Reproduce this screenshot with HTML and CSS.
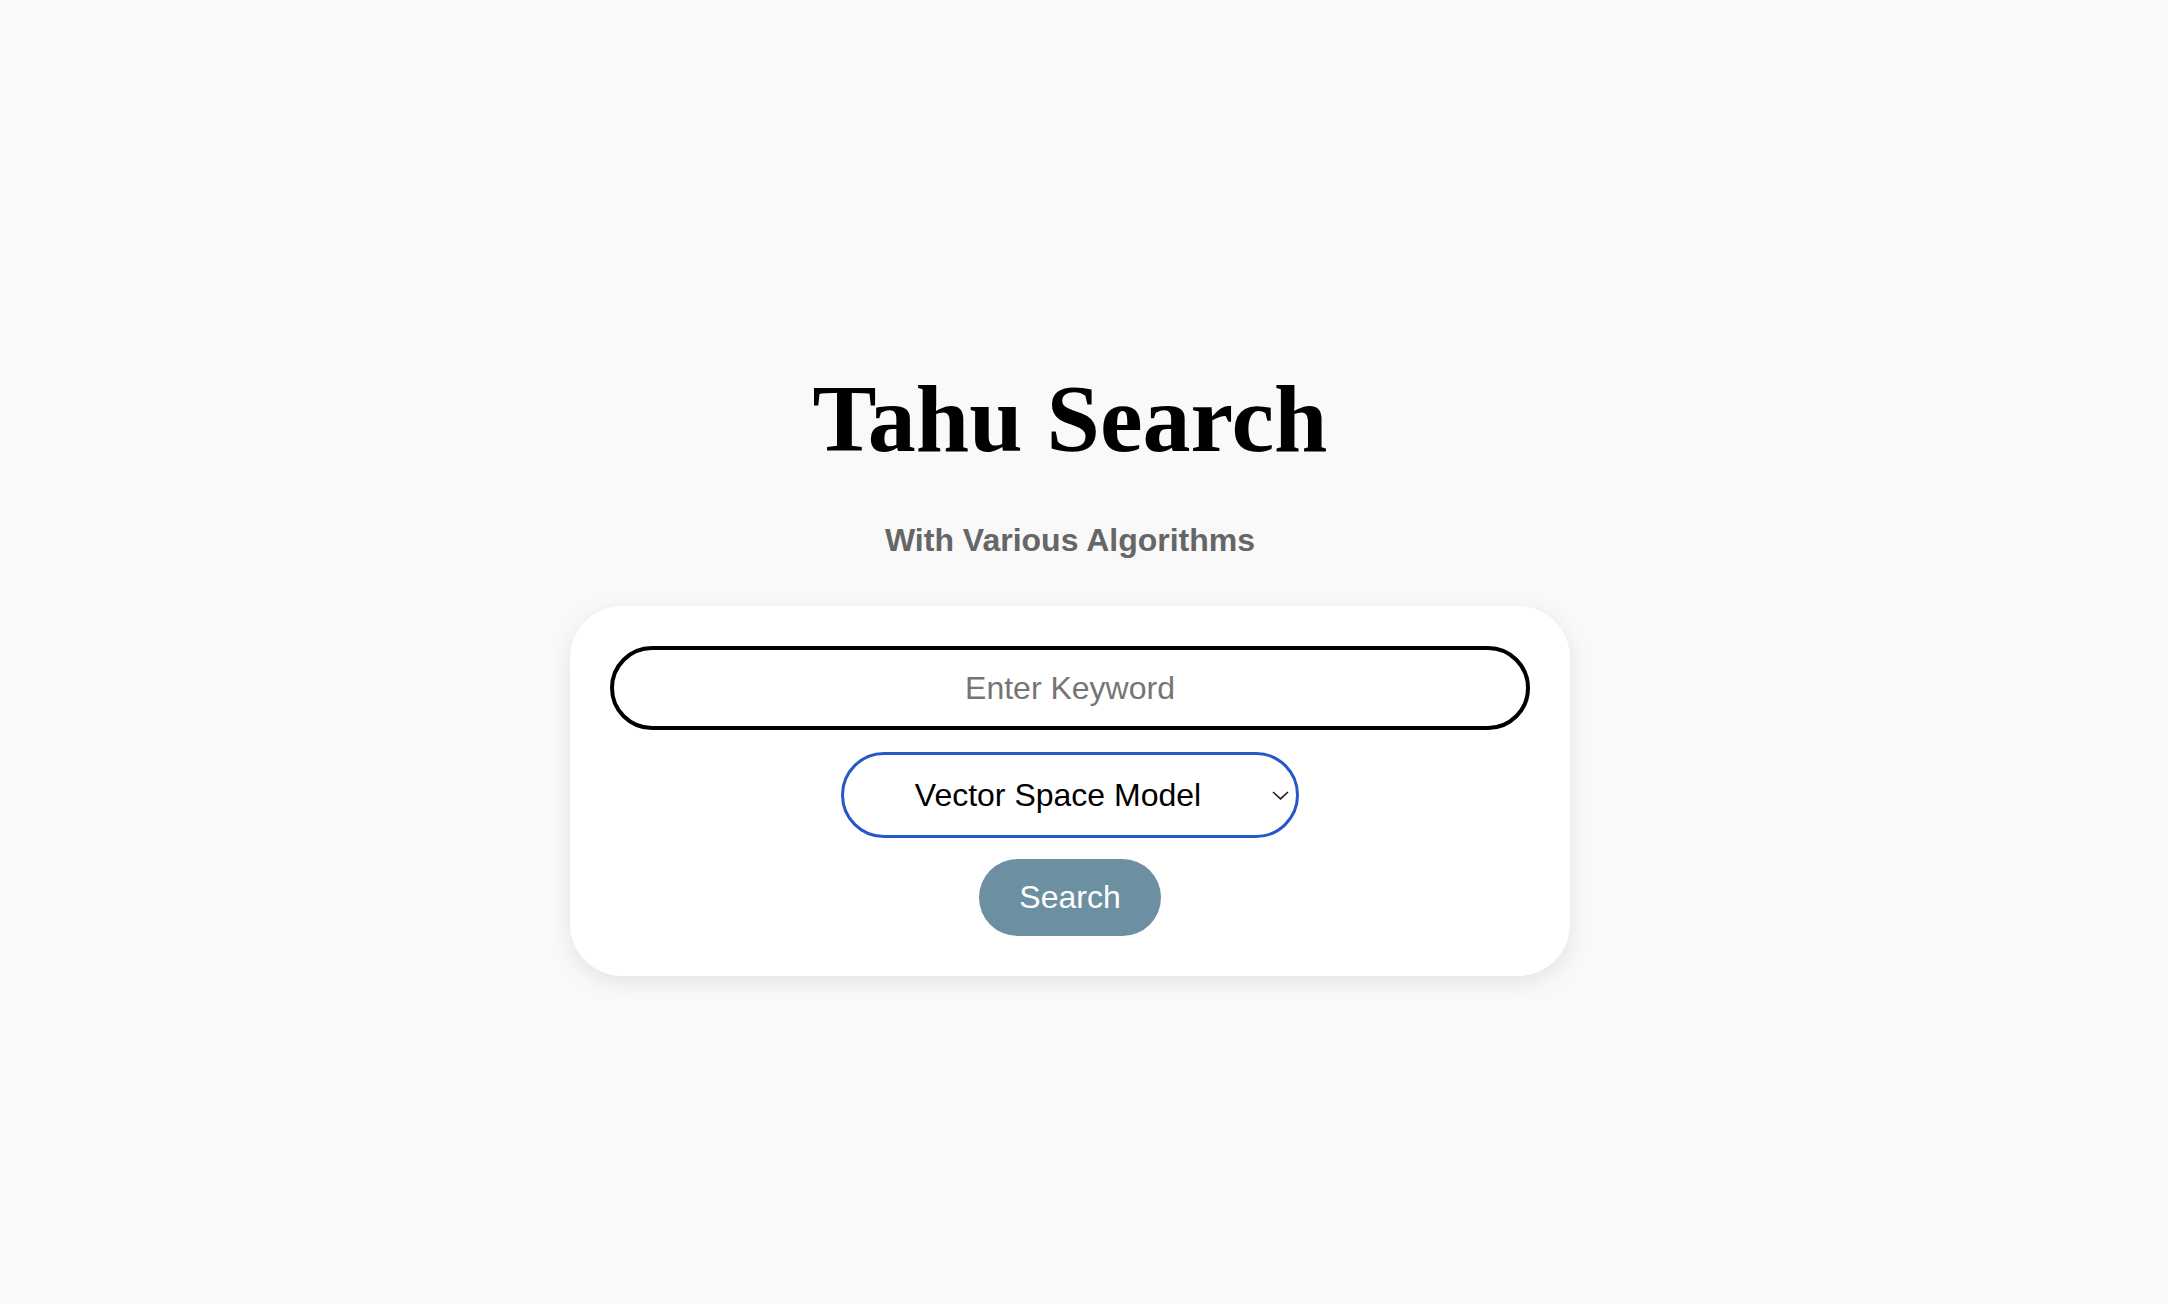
FILE: index.html
```html
<!DOCTYPE html>
<html lang="en">
<head>
<meta charset="utf-8">
<title>Tahu Search</title>
<link rel="stylesheet" href="styles.css">
</head>
<body>
<main class="page">
  <h1 class="title">Tahu Search</h1>
  <h2 class="subtitle">With Various Algorithms</h2>
  <form class="card">
    <input class="keyword" type="text" placeholder="Enter Keyword">
    <span class="select-wrap">
      <select class="algo">
        <option>Vector Space Model</option>
        <option>Boolean Model</option>
        <option>Jaccard</option>
      </select>
      <svg class="chevron" width="17" height="9" viewBox="0 0 17 9"><path d="M1 1 L8.5 7.8 L16 1" fill="none" stroke="#1a1a1a" stroke-width="1.6"/></svg>
    </span>
    <button class="search-btn" type="button">Search</button>
  </form>
</main>
</body>
</html>
```
FILE: styles.css
```css
html, body {
  margin: 0;
  padding: 0;
}
body {
  background: #f9f9f9;
  min-height: 100vh;
}
.page {
  box-sizing: border-box;
  display: flex;
  flex-direction: column;
  align-items: center;
  padding: 371px 28px 0 0;
}
.title {
  margin: 0;
  font-family: "Liberation Serif", "Times New Roman", serif;
  font-weight: bold;
  font-size: 96px;
  line-height: 96px;
  letter-spacing: 0;
  color: #000;
}
.subtitle {
  margin: 57px 0 0;
  font-family: "Liberation Sans", Arial, sans-serif;
  font-weight: bold;
  font-size: 32px;
  line-height: 32px;
  color: #666666;
}
.card {
  box-sizing: border-box;
  width: 1000px;
  margin-top: 50px;
  padding: 40px;
  background: #ffffff;
  border-radius: 52px;
  box-shadow: 0 6px 22px rgba(0, 0, 0, 0.09);
  display: flex;
  flex-direction: column;
  align-items: center;
}
.keyword {
  box-sizing: border-box;
  width: 100%;
  height: 84px;
  margin: 0;
  padding: 0 30px;
  border: 4px solid #000;
  border-radius: 42px;
  background: #fff;
  font-family: "Liberation Sans", Arial, sans-serif;
  font-size: 32px;
  text-align: center;
  color: #000;
  outline: none;
}
.keyword::placeholder {
  color: #757575;
}
.select-wrap {
  position: relative;
  display: block;
  margin-top: 22px;
  width: 458px;
  height: 86px;
}
.algo {
  box-sizing: border-box;
  width: 458px;
  height: 86px;
  margin: 0;
  padding: 0 44px 0 20px;
  border: 3.5px solid #2457c9;
  border-radius: 43px;
  background: #fff;
  -webkit-appearance: none;
  appearance: none;
  font-family: "Liberation Sans", Arial, sans-serif;
  font-size: 32px;
  color: #000;
  text-align: center;
  text-align-last: center;
  outline: none;
}
.chevron {
  position: absolute;
  right: 10px;
  top: 39px;
  pointer-events: none;
}
.search-btn {
  margin-top: 21px;
  width: 182px;
  height: 77px;
  border: none;
  border-radius: 39px;
  background: #6d8fa2;
  color: #fff;
  font-family: "Liberation Sans", Arial, sans-serif;
  font-size: 32px;
  padding: 0;
}
```
